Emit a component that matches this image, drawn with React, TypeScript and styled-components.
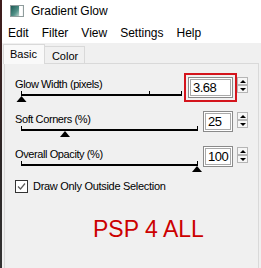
import styled, { createGlobalStyle } from "styled-components";

const GlobalStyle = createGlobalStyle`
  html, body {
    margin: 0;
    padding: 0;
    overflow: hidden;
  }
  * {
    box-sizing: border-box;
  }
`;

const settings = [
  { label: "Glow Width (pixels)", value: "3.68", boxWidth: 45, end: 166, ticks: [6, 134, 166], thumb: 6.5, highlight: true },
  { label: "Soft Corners (%)", value: "25", boxWidth: 30, end: 182, ticks: [6, 182], thumb: 50, highlight: false },
  { label: "Overall Opacity (%)", value: "100", boxWidth: 30, end: 182, ticks: [6, 182], thumb: 182, highlight: false },
];

function AppIcon() {
  return (
    <svg width="14" height="12" viewBox="0 0 14 12">
      <defs>
        <linearGradient id="glow" x1="0" y1="0" x2="1" y2="1">
          <stop offset="0" stopColor="#1d5a55" />
          <stop offset="0.6" stopColor="#4f8f86" />
          <stop offset="1" stopColor="#b9d3cc" />
        </linearGradient>
      </defs>
      <rect x="0.5" y="0.5" width="13" height="11" fill="#f4f6f6" stroke="#8f9c9c" />
      <rect x="1" y="1" width="8" height="10" fill="url(#glow)" />
      <rect x="10" y="1" width="2" height="10" fill="#ffffff" />
    </svg>
  );
}

function Slider({ end, ticks, thumb }: { end: number; ticks: number[]; thumb: number }) {
  return (
    <Track width={end + 6} height="12">
      <rect x="6" y="3" width={end - 5} height="2" fill="#000" />
      {ticks.map((t) => (
        <rect key={t} x={t} y="0" width="1" height="3" fill="#000" />
      ))}
      <polygon points={`${thumb},5 ${thumb - 5},11 ${thumb + 5},11`} fill="#000" />
    </Track>
  );
}

function SpinArrows() {
  return (
    <Spinner>
      <SpinButton>
        <Arrow $up />
      </SpinButton>
      <SpinButton>
        <Arrow />
      </SpinButton>
    </Spinner>
  );
}

export default function App() {
  return (
    <>
      <GlobalStyle />
      <Desktop>
        <Window>
          <TitleBar>
            <AppIcon />
            <Title>Gradient Glow</Title>
          </TitleBar>
          <MenuBar>
            {["Edit", "Filter", "View", "Settings", "Help"].map((m) => (
              <MenuItem key={m}>{m}</MenuItem>
            ))}
          </MenuBar>
          <Client>
            <TabStrip>
              <Tab $active>Basic</Tab>
              <Tab>Color</Tab>
            </TabStrip>
            <Panel>
              <Settings>
                {settings.map((s) => {
                  const box = <ValueBox $width={s.boxWidth}>{s.value}</ValueBox>;
                  return (
                    <SettingRow key={s.label}>
                      <Control>
                        <Label>{s.label}</Label>
                        <Slider end={s.end} ticks={s.ticks} thumb={s.thumb} />
                      </Control>
                      <ValueGroup>
                        {s.highlight ? <Highlight>{box}</Highlight> : box}
                        <SpinArrows />
                      </ValueGroup>
                    </SettingRow>
                  );
                })}
              </Settings>
              <CheckRow>
                <CheckBox>
                  <svg width="11" height="11" viewBox="0 0 11 11">
                    <path d="M2 5.5 L4.5 8 L9 2.5" fill="none" stroke="#5a5a5a" strokeWidth="1.2" />
                  </svg>
                </CheckBox>
                <CheckLabel>Draw Only Outside Selection</CheckLabel>
              </CheckRow>
              <Watermark>PSP 4 ALL</Watermark>
            </Panel>
          </Client>
        </Window>
      </Desktop>
    </>
  );
}

const Desktop = styled.div`
  display: flex;
  width: 261px;
  height: 268px;
  overflow: hidden;
  padding-left: 2px;
  background: linear-gradient(#401c1c, #2c2626 60%, #333333);
  font-family: "Liberation Sans", Arial, sans-serif;
  color: #000;
`;

const Window = styled.div`
  flex: 1;
  display: flex;
  flex-direction: column;
  min-height: 0;
  background: #f0f0f0;
`;

const TitleBar = styled.div`
  flex-shrink: 0;
  height: 22px;
  display: flex;
  align-items: center;
  gap: 7px;
  padding-left: 8px;
  background: #fff;
`;

const Title = styled.span`
  font-size: 12px;
`;

const MenuBar = styled.div`
  flex-shrink: 0;
  height: 21px;
  display: flex;
  gap: 13px;
  padding: 2px 0 0 6px;
  background: #fff;
`;

const MenuItem = styled.span`
  font-size: 12px;
  line-height: 19px;
`;

const Client = styled.div`
  flex: 1;
  min-height: 0;
  display: flex;
  flex-direction: column;
  padding: 1px 2px 0 2px;
`;

const TabStrip = styled.div`
  flex-shrink: 0;
  height: 19px;
  display: flex;
  align-items: flex-end;
  margin-left: -1px;
`;

const Tab = styled.div<{ $active?: boolean }>`
  position: relative;
  z-index: ${({ $active }) => ($active ? 1 : 0)};
  height: ${({ $active }) => ($active ? "20px" : "17px")};
  margin-bottom: ${({ $active }) => ($active ? "-1px" : "0")};
  padding: 3px ${({ $active }) => ($active ? "7px 0 6px" : "6px 0 7px")};
  border: 1px solid #d9d9d9;
  border-bottom: none;
  margin-left: ${({ $active }) => ($active ? "0" : "-1px")};
  background: ${({ $active }) => ($active ? "#f9f9f9" : "#f0f0f0")};
  font-size: 11px;
  line-height: 13px;
`;

const Panel = styled.div`
  flex-shrink: 0;
  height: 215px;
  border: 1px solid #d9d9d9;
  padding: 14px 10px 0 10px;
  background: #f0f0f0;
`;

const Settings = styled.div`
  display: flex;
  flex-direction: column;
  gap: 10px;
`;

const SettingRow = styled.div`
  display: grid;
  grid-template-columns: minmax(0, 1fr) auto;
  align-items: start;
`;

const Control = styled.div`
  display: flex;
  flex-direction: column;
`;

const Label = styled.div`
  font-size: 11px;
  line-height: 13px;
  letter-spacing: -0.4px;
  white-space: nowrap;
`;

const Track = styled.svg`
  display: block;
  overflow: visible;
`;

const ValueGroup = styled.div`
  display: flex;
  align-items: flex-start;
  gap: 4px;
`;

const ValueBox = styled.div<{ $width: number }>`
  width: ${({ $width }) => $width}px;
  height: 21px;
  margin-top: -2px;
  padding-left: 4px;
  border: 1px solid #8a8a8a;
  box-shadow: inset 0 0 0 1px #fff, inset 0 0 0 2px #a9a9a9;
  background: #fff;
  font-size: 13px;
  line-height: 19px;
  letter-spacing: -0.5px;
`;

const Highlight = styled.div`
  margin: -5px -4px -4px -4px;
  padding: 2px;
  border: 2px solid #d4141c;
  & > div {
    margin-top: 0;
  }
`;

const Spinner = styled.div`
  width: 11px;
  margin-top: -1px;
  display: flex;
  flex-direction: column;
`;

const SpinButton = styled.div`
  height: 8px;
  display: flex;
  align-items: center;
  justify-content: center;
  border: 1px solid #b5b5b5;
  background: #f6f6f6;
`;

const Arrow = styled.span<{ $up?: boolean }>`
  width: 0;
  height: 0;
  border-left: 3px solid transparent;
  border-right: 3px solid transparent;
  ${({ $up }) => ($up ? "border-bottom: 3px solid #000;" : "border-top: 3px solid #000;")}
`;

const CheckRow = styled.div`
  display: flex;
  align-items: center;
  gap: 5px;
  margin-top: 7px;
`;

const CheckBox = styled.div`
  width: 13px;
  height: 13px;
  display: flex;
  align-items: center;
  justify-content: center;
  border: 1px solid #333;
  background: #fff;
`;

const CheckLabel = styled.span`
  font-size: 11px;
  line-height: 13px;
  letter-spacing: -0.3px;
`;

const Watermark = styled.div`
  margin: 23px 0 0 78px;
  font-size: 23px;
  line-height: 26px;
  color: #cc0000;
`;
